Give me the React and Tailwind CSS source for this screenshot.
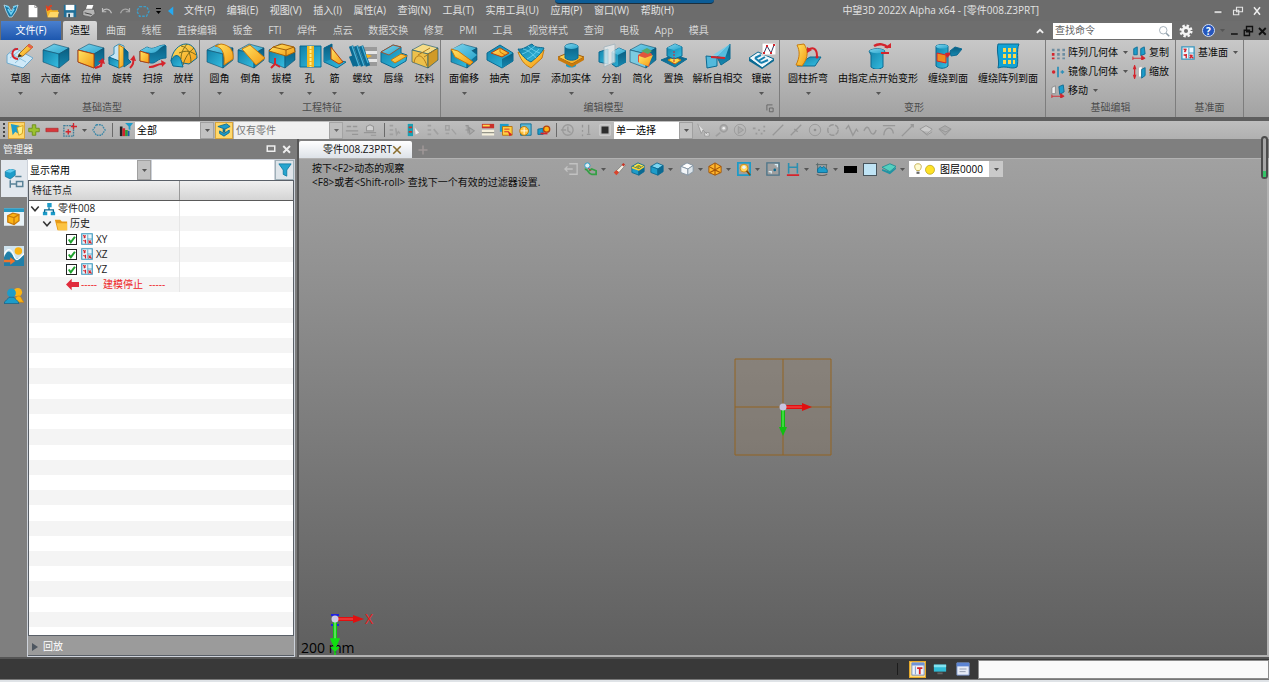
import { useState } from 'react';

const MENUS = ['文件(F)', '编辑(E)', '视图(V)', '插入(I)', '属性(A)', '查询(N)', '工具(T)', '实用工具(U)', '应用(P)', '窗口(W)', '帮助(H)'];
const TABS = ['曲面', '线框', '直接编辑', '钣金', 'FTI', '焊件', '点云', '数据交换', '修复', 'PMI', '工具', '视觉样式', '查询', '电极', 'App', '模具'];

const B1 = '#5fcbee';
const B2 = '#1d9cc9';
const B3 = '#0b6a92';
const Y1 = '#ffd84a';
const Y2 = '#fbb414';
const Y3 = '#c97a0c';
const RED = '#d4242c';

// shaded fills of the ribbon icons, see <Shades />
const GT = 'url(#shade-top)';
const GB = 'url(#shade-blue)';
const GD = 'url(#shade-dark)';
const GY = 'url(#shade-yellow)';

function Shades() {
  return (
    <svg aria-hidden="true" className="absolute h-0 w-0">
      <defs>
        <linearGradient id="shade-top" x1="0" y1="0" x2="1" y2="1"><stop stopColor="#7ed3ec" /><stop offset="1" stopColor="#2aa6cd" /></linearGradient>
        <linearGradient id="shade-blue" x1="0" y1="0" x2="1" y2="1"><stop stopColor="#1180a8" /><stop offset="1" stopColor="#36bfe2" /></linearGradient>
        <linearGradient id="shade-dark" x1="0" y1="0" x2="0" y2="1"><stop stopColor="#0a5d80" /><stop offset="1" stopColor="#1688b0" /></linearGradient>
        <linearGradient id="shade-yellow" x1="0" y1="0" x2="1" y2="1"><stop stopColor="#ffe566" /><stop offset="1" stopColor="#f59a12" /></linearGradient>
      </defs>
    </svg>
  );
}

function Solid({ top = GT, left = GB, right = GD }) {
  return (
    <g stroke="#0c4f6e" strokeWidth=".6" strokeLinejoin="round">
      <path d="M1 7 12 1 27 5 17 11Z" fill={top} />
      <path d="M1 7 17 11V25L1 19Z" fill={left} />
      <path d="M17 11 27 5V17L17 25Z" fill={right} />
    </g>
  );
}

const BIG = {
  sketch: (
    <>
      <path d="M1 12 9 5 27 15 17 25 1 20Z" fill="#cfe9f8" stroke="#6fa9cc" />
      <path d="M4 15l9-7M9 20l9-8M4 10l16 9" stroke="#8fc3e0" fill="none" />
      <path d="M12 6C5 5 4 16 12 16" fill="none" stroke={RED} strokeWidth="2" />
      <path d="M13 11 23 1l4 3-10 9-5 1z" fill={GY} stroke="#a35f0a" strokeWidth=".8" />
      <path d="M23 1l4 3-2 2-4-3z" fill="#e8604c" />
      <path d="M12 14l1-3 3 2z" fill="#222" />
    </>
  ),
  block: <Solid />,
  extrude: (
    <>
      <Solid />
      <path d="M1 7 17 11V25L1 19Z" fill={GY} stroke="#b5410f" />
      <path d="M18 25l6-2 1-5" fill="none" stroke={RED} strokeWidth="2.200" />
      <path d="M21 19l5-4 2 6z" fill={RED} />
    </>
  ),
  revolve: (
    <>
      <path d="M1 18V14l5-3V4l5-3 5 2v20l-5 2z" fill="#c4e5f4" stroke="#3c8fb3" />
      <path d="M1 14l10 4v7L1 21z" fill={GB} stroke={B3} />
      <path d="M11 2l5 3v17l-5 3z" fill={GY} stroke={Y3} />
      <path d="M16 5l4 4v7l3 3-7 5z" fill={GD} stroke={B3} />
      <path d="M22 25c3-3 4-6 3-9" fill="none" stroke={RED} strokeWidth="2" />
      <path d="M22 17l4-5 2 6z" fill={RED} />
    </>
  ),
  sweep: (
    <>
      <path d="M1 8l7-4c7 4 10-2 18-2l1 1v12c-9 0-10 6-15 5L1 18z" fill={GD} stroke={B3} />
      <path d="M1 8l7-4c7 4 10-2 18-2-7 3-7 8-14 8z" fill={GT} />
      <path d="M1 8l9 3v9l-9-2z" fill={GY} stroke="#b5410f" />
      <path d="M10 24c6 1 8-4 14-3" fill="none" stroke={RED} strokeWidth="2" />
      <path d="M22 17l5 3-4 4z" fill={RED} />
    </>
  ),
  loft: (
    <>
      <path d="M1 18C2 8 9 1 16 1s11 7 11 14l-8 6z" fill={GY} stroke={B3} />
      <path d="M1 18c2-6 8-8 10-1l2 7-10-1z" fill={GB} stroke={B3} />
      <path d="M11 3c7 1 10 8 10 17M17 1c-4 5-6 9-6 15M24 5c-6 5-9 10-11 17M9 10c7-3 12-2 17 2" fill="none" stroke="#7b6b1b" />
    </>
  ),
  fillet: (
    <>
      <Solid />
      <path d="M9 3C17 4 19 12 18 22l9-6C28 8 24 2 15 1z" fill={GY} stroke={Y3} />
    </>
  ),
  chamfer: (
    <>
      <Solid />
      <path d="M5 6 13 2 28 15 19 22Z" fill={GY} stroke={Y3} />
    </>
  ),
  draft: (
    <>
      <Solid />
      <path d="M1 8 5 4 14 1 26 4 27 9 18 13Z" fill={GY} stroke="#a35f0a" />
      <path d="M5 4l13 3 8-3M18 7v6" fill="none" stroke="#a35f0a" />
      <path d="M7 15v6l-4 4m4-4 5 3" fill="none" stroke={RED} strokeWidth="2" />
    </>
  ),
  hole: (
    <>
      <path d="M4 3h21v21H4z" fill={GB} stroke={B3} />
      <path d="M11 3h7v21h-7z" fill="#f2b822" />
      <path d="M14.500 3v21" stroke="#fff08a" strokeWidth="2" strokeDasharray="3 1" />
    </>
  ),
  rib: (
    <>
      <path d="M3 5 11 1v15l14 3-9 6L3 19z" fill={GB} stroke={B3} />
      <path d="M3 5l8-4v15l-8 3z" fill={GD} />
      <path d="M10 4l12 15-4 2-8-5z" fill={GY} stroke="#b5410f" />
    </>
  ),
  thread: (
    <>
      <path d="M15 4h13v4H15zM15 11h13v5H15zM15 19h13v4H15z" fill="#9a9a9a" />
      <path d="M17 8h11v3H17zM17 16h11v3H17z" fill="#e6e6e6" />
      <path d="M2 3l7 20M7 3l7 20M12 3l7 20M2 13l4 10" stroke={B3} strokeWidth="4.500" />
      <path d="M3 3l7 20M8 3l7 20M13 3l6 17" stroke="#4db4d8" strokeWidth="1.200" />
      <path d="M17 11l6 2-5 2z" fill={Y2} />
    </>
  ),
  lip: (
    <>
      <path d="M1 9 13 2l8 2v6l6 2-1 6-12 7L1 19z" fill={GB} stroke={B3} />
      <path d="M1 9l12-7 8 2-12 8z" fill={GT} stroke="#b5410f" strokeWidth=".8" />
      <path d="M11 17l10-6 6 2-12 7z" fill={GY} stroke={Y3} />
    </>
  ),
  stock: (
    <>
      <Solid top="#f6dc86" left="#edc04b" right="#d19a26" />
      <path d="M3 20c1-10 9-10 13 3M7 12l12-7M13 14l11-7" fill="none" stroke="#b07a1b" />
    </>
  ),
  faceOffset: (
    <>
      <Solid />
      <path d="M2 6 13 1 27 12 21 17Z" fill={GT} />
      <path d="M1 6 8 8 23 19 20 22 5 14Z" fill={GY} stroke={Y3} />
    </>
  ),
  shell: (
    <>
      <path d="M1 10 14 2l13 8v8l-11 7L1 17z" fill={GB} stroke={B3} />
      <path d="M16 16v9l11-7v-8z" fill={GD} />
      <path d="M5 10l9-5 9 5-7 4z" fill={GY} stroke="#b5410f" />
      <path d="M14 5v4l5 3" fill="none" stroke={Y3} />
    </>
  ),
  thicken: (
    <>
      <path d="M1 9c5 3 7-5 14-7 3 4 7 3 12 5l-2 8-11 10C9 22 5 20 1 9z" fill={GY} stroke={Y3} />
      <path d="M1 6c5 1 9-3 14-5 3 4 7 3 12 4-2 5-8 10-13 14C9 17 4 12 1 6z" fill={GB} stroke={B3} />
      <path d="M6 6c5 1 10 5 13 9M11 3c3 3 8 6 12 7M5 11c4-1 9-5 13-8M10 16c4-2 9-6 12-10" fill="none" stroke="#7fdcf8" strokeWidth=".7" />
    </>
  ),
  addShape: (
    <>
      <path d="M9 19h10v4c-3 2-7 2-10 0z" fill={B2} />
      <path d="M1 14l12-5 14 5-12 7z" fill={GY} stroke="#a35f0a" />
      <path d="M1 14v3l14 7v-3zM15 21l12-7v3l-12 7z" fill={Y3} />
      <path d="M8 3c3-3 9-3 13 0v12c-4 3-9 3-13 0z" fill={GD} stroke={B3} />
      <ellipse cx="14.500" cy="3.500" rx="6.500" ry="2.500" fill={GT} />
    </>
  ),
  divide: (
    <>
      <path d="M1 9l9-3v15l-9-2z" fill={GB} stroke={B3} />
      <path d="M14 9l7-4 7 3v11l-10 5-4-3z" fill={GB} stroke={B3} />
      <path d="M14 9l7-4 7 3-8 4z" fill={GT} />
      <path d="M20 12v12l8-5V8z" fill={GD} />
      <path d="M6 4l11-3v18L6 24z" fill="#e9eef0" opacity=".75" stroke="#9fb3bd" />
    </>
  ),
  simplify: (
    <>
      <Solid left="#7ccbe0" />
      <path d="M9 19V12l8-5 6 4-3 13z" fill="#e2553b" />
      <path d="M10 13l6 2 8-3-5 11-9-3z" fill={GY} />
      <path d="M12 8l6-3 5 3-4 3z" fill="#58a868" />
    </>
  ),
  replace: (
    <>
      <path d="M1 17l13-5 13 4-12 8z" fill={GD} stroke={B3} />
      <path d="M8 17l6-3 7 3-6 4z" fill={Y1} stroke={Y3} />
      <path d="M7 5l8-4 7 3v9l-8 3-7-3z" fill={GB} stroke={B3} />
      <path d="M7 5l8-4 7 3-8 3z" fill={GT} />
      <path d="M14 8v13" stroke={RED} strokeDasharray="2 1" />
    </>
  ),
  intersect: (
    <>
      <path d="M2 13l11 1v9L3 25z" fill="#53b9dc" stroke={B3} />
      <path d="M13 14 26 1v15l-9 6z" fill={GD} stroke={B3} />
      <path d="M9 12 26 1l-5 14z" fill="#67d0f0" opacity=".8" />
      <path d="M7 14l14 1" stroke={RED} strokeWidth="2" />
    </>
  ),
  emboss: (
    <>
      <path d="M1 15l9-6 16 7-12 9z" fill="#eef7fb" stroke={B3} />
      <path d="M1 15v3l13 8v-2zM14 26l12-8v-2l-12 9z" fill={B3} />
      <path d="M7 15l6-3M10 18l7-4M13 20l7-3M7 15l6 5" stroke="#167fae" strokeWidth="2" fill="none" />
      <path d="M14 0h14v12H14z" fill="#fff" stroke="#bbb" />
      <path d="M16 10l3-7 4 7 3-8" fill="none" stroke="#3a3a60" />
      <path d="M15 9h2v2h-2zM18 2h2v2h-2zM22 9h2v2h-2zM25 1h2v2h-2z" fill={RED} />
    </>
  ),
  bend: (
    <>
      <path d="M8 19l8-5h11l-6 9H3z" fill={GB} stroke={B3} />
      <path d="M3 2l7-1c4 6 5 13-2 22l-6-1C6 14 6 8 3 2z" fill={GY} stroke={Y3} />
      <path d="M14 7c5-4 9-1 9 6" fill="none" stroke={RED} strokeWidth="2" />
      <path d="M13 4v6l5-3z" fill={RED} />
      <circle cx="23" cy="14" r="1.500" fill={RED} />
    </>
  ),
  morph: (
    <>
      <path d="M5 8c4-3 13-3 16 0l-2 3v13c-4 3-8 3-12 0V12z" fill={GB} stroke={B3} />
      <path d="M5 8c4-3 13-3 16 0-4 3-12 3-16 0z" fill={GT} />
      <path d="M10 3c5-3 11-2 14 2" fill="none" stroke={RED} strokeWidth="2.500" />
      <path d="M20 5h7l0-5z" fill={RED} />
      <path d="M17 10h8" stroke={RED} strokeWidth="2" />
    </>
  ),
  wrapFace: (
    <>
      <path d="M2 3c3-2 9-2 12 0v20c-3 3-9 3-12 0z" fill={GB} stroke={B3} />
      <ellipse cx="8" cy="3.500" rx="6" ry="2" fill={GT} />
      <path d="M3 10l9 2v8l-9-2z" fill="#f08a1e" stroke={RED} />
      <path d="M11 10l8-1-6 6z" fill={RED} />
      <path d="M16 8l5-4 7 2-5 6-6 1z" fill={GD} stroke={B3} />
    </>
  ),
  wrapPattern: (
    <>
      <path d="M4 1h21c-3 7 0 16-2 23-6 3-10-2-19 1 2-8-2-16 0-24z" fill="#13a3d4" stroke={B3} />
      <path d="M9 5h3v4H9zM14 5h3v4h-3zM19 5h3v4h-3zM9 11h3v4H9zM14 11h3v4h-3zM19 11h3v4h-3zM9 17h3v4H9zM14 17h3v4h-3zM19 17h2v4h-2z" fill={Y1} />
    </>
  ),
};

const GROUPS = [
  {
    title: '基础造型',
    pad: 'pl-[5px] w-[200px]',
    tools: [
      ['草图', 'sketch', 1, 'w-[31px]'],
      ['六面体', 'block', 1, 'w-[40px]'],
      ['拉伸', 'extrude', 0, 'w-[31px]'],
      ['旋转', 'revolve', 0, 'w-[31px]'],
      ['扫掠', 'sweep', 1, 'w-[31px]'],
      ['放样', 'loft', 1, 'w-[31px]'],
    ],
  },
  {
    title: '工程特征',
    pad: 'pl-1 w-[241px]',
    tools: [
      ['圆角', 'fillet', 1, 'w-[31px]'],
      ['倒角', 'chamfer', 0, 'w-[31px]'],
      ['拔模', 'draft', 1, 'w-[31px]'],
      ['孔', 'hole', 1, 'w-[25px]'],
      ['筋', 'rib', 1, 'w-[25px]'],
      ['螺纹', 'thread', 1, 'w-[31px]'],
      ['唇缘', 'lip', 0, 'w-[31px]'],
      ['坯料', 'stock', 0, 'w-[31px]'],
    ],
  },
  {
    title: '编辑模型',
    pad: 'pl-[3px] w-[339px]',
    launcher: true,
    tools: [
      ['面偏移', 'faceOffset', 1, 'w-[40px]'],
      ['抽壳', 'shell', 0, 'w-[31px]'],
      ['加厚', 'thicken', 0, 'w-[31px]'],
      ['添加实体', 'addShape', 1, 'w-[50px]'],
      ['分割', 'divide', 1, 'w-[31px]'],
      ['简化', 'simplify', 0, 'w-[31px]'],
      ['置换', 'replace', 0, 'w-[31px]'],
      ['解析自相交', 'intersect', 0, 'w-[57px]'],
      ['镶嵌', 'emboss', 1, 'w-[31px]'],
    ],
  },
  {
    title: '变形',
    pad: 'pl-[3px] w-[266px]',
    tools: [
      ['圆柱折弯', 'bend', 1, 'w-[50px]'],
      ['由指定点开始变形', 'morph', 1, 'w-[90px]'],
      ['缠绕到面', 'wrapFace', 0, 'w-[50px]'],
      ['缠绕阵列到面', 'wrapPattern', 0, 'w-[70px]'],
    ],
  },
];

function Caret({ className = 'text-[#555]' }) {
  return (
    <svg viewBox="0 0 5 3" className={`h-[3px] w-[5px] shrink-0 ${className}`}>
      <path d="M0 0h5L2.500 3z" fill="currentColor" />
    </svg>
  );
}

// 16 unit glyph used by every small toolbar
function Glyph({ children, className = 'h-3.5 w-3.5' }) {
  return (
    <svg viewBox="0 0 16 16" className={`shrink-0 ${className}`} fill="none">
      {children}
    </svg>
  );
}

function IconButton({ label, className = '', children }) {
  return (
    <button type="button" aria-label={label} className={`flex shrink-0 items-center justify-center ${className}`}>
      {children}
    </button>
  );
}

const PlaneGlyph = () => (
  <>
    <path d="M1 1h14v14H1z" fill="#eaf6fb" stroke="#3a96bd" strokeWidth="1.500" />
    <path d="M9 2v6h6M9 8v6" stroke="#3a96bd" />
    <path d="M3 3l3 3M6 3L4 7M6 9v5M3 10l3 1M10 10l4 4M13 10l-3 4" stroke={RED} strokeWidth="1.600" />
  </>
);

function TitleBar() {
  return (
    <header className="flex h-[21px] shrink-0 items-center bg-[#6c6c6c] text-[#e2e2e2]">
      <div className="flex w-[184px] shrink-0 items-center pl-[3px]">
        <Glyph className="h-4 w-4">
          <path d="M1 2l5 2 2 4 3-4 4-2-2 6-4 6H6L3 8z" fill="#1478a8" stroke="#bfe6f6" strokeWidth=".8" />
          <path d="M5 6l3 5 3-5M3 3l3 1M13 3l-3 1" stroke="#6fd0f3" strokeWidth="1.500" />
        </Glyph>
        <IconButton label="新建" className="ml-[7px] w-3.5">
          <Glyph><path d="M3 1h7l3 3v11H3z" fill="#fff" /><path d="M10 1v3h3" stroke="#999" /></Glyph>
        </IconButton>
        <IconButton label="打开" className="ml-[5px] w-3.5">
          <Glyph><path d="M1 5h5l2 2h7v8H3z" fill="#f4b223" /><path d="M3 15l3-6h10l-2 6z" fill="#ffd768" /><path d="M8 2c-3 0-4 1-4 4M6 6L3 7 2 3z" stroke="#e2401f" fill="#e2401f" strokeWidth="1.500" /></Glyph>
        </IconButton>
        <IconButton label="保存" className="ml-1 w-3.5">
          <Glyph><path d="M1 1h14v14H1z" fill="#1f6f98" /><path d="M3 1h10v6H3z" fill="#fff" /><path d="M4 10h8v5H4z" fill="#d7e5ec" /><path d="M6 11h2v4H6z" fill="#1c3c4c" /></Glyph>
        </IconButton>
        <IconButton label="打印" className="ml-[5px] w-3.5">
          <Glyph><path d="M6 1h7l-2 6H4z" fill="#fff" /><path d="M1 8l3-2h10l1 5-5 4-9-2z" fill="#b5b5b5" stroke="#555" strokeWidth=".8" /><path d="M3 10l8 2" stroke="#333" /></Glyph>
        </IconButton>
        <IconButton label="撤销" className="ml-1 w-3.5">
          <Glyph className="h-3 w-3"><path d="M2 8c4-4 10-3 12 3M2 4v5h5" stroke="#bdbdbd" strokeWidth="1.500" /></Glyph>
        </IconButton>
        <IconButton label="重做" className="ml-1 w-3.5">
          <Glyph className="h-3 w-3"><path d="M14 8C10 4 4 5 2 11M14 4v5H9" stroke="#a8a8a8" strokeWidth="1.500" /></Glyph>
        </IconButton>
        <IconButton label="旋转视图" className="ml-1 w-3.5">
          <Glyph><path d="M4 3h8l3 5-3 6H4L1 8z" stroke="#3c9ec9" strokeWidth="1.500" strokeDasharray="3 1.500" /></Glyph>
        </IconButton>
        <IconButton label="自定义" className="ml-0.5 w-3 flex-col gap-0.5">
          <span className="h-px w-[5px] bg-black" /><Caret className="text-black" />
        </IconButton>
        <Glyph className="ml-px h-3 w-3"><path d="M11 2v12L4 8z" fill="#25a9f0" /></Glyph>
      </div>
      <nav className="flex w-[490px] shrink-0 justify-between">
        {MENUS.map(m => <button type="button" key={m} className="whitespace-nowrap">{m}</button>)}
      </nav>
      <div className="flex flex-1 items-center justify-end">
        <h1 className="whitespace-nowrap">中望3D 2022X Alpha x64 - [零件008.Z3PRT]</h1>
        <div className="ml-[173px] flex w-[57px] items-center justify-between pr-1.5">
          <IconButton label="最小化"><Glyph className="h-3 w-3"><path d="M3 8h10v3H3z" fill="#e4e4e4" stroke="#444" strokeWidth=".5" /></Glyph></IconButton>
          <IconButton label="还原"><Glyph className="h-3 w-3"><path d="M6 3h8v6h-8zM2 7h7v6H2z" stroke="#e4e4e4" strokeWidth="1.500" /></Glyph></IconButton>
          <IconButton label="关闭"><Glyph className="h-3 w-3"><path d="M4 3l8 10M12 3L4 13" stroke="#eee" strokeWidth="2" /></Glyph></IconButton>
        </div>
      </div>
    </header>
  );
}

function TabBar({ active, onSelect }) {
  return (
    <div className="flex h-[19px] shrink-0 items-center bg-[#6e6e6e] text-[#d6d6d6]">
      <button type="button" className="ml-px h-full w-[60px] shrink-0 bg-linear-to-b from-[#4a80cf] to-[#1d57ae] text-white">文件(F)</button>
      <button type="button" onClick={() => onSelect('造型')} className="ml-0.5 h-full w-[34px] shrink-0 rounded-t-xs bg-linear-to-b from-[#d9d9d9] to-[#c4c4c4] text-black">造型</button>
      <div className="ml-[9px] flex w-[603px] shrink-0 justify-between">
        {TABS.map(t => (
          <button type="button" key={t} onClick={() => onSelect(t)} aria-pressed={active === t} className="whitespace-nowrap">{t}</button>
        ))}
      </div>
      <div className="flex flex-1 items-center justify-end pr-px">
        <IconButton label="折叠功能区"><Glyph className="h-2.5 w-2.5"><path d="M3 11l5-5 5 5" stroke="#eee" strokeWidth="3" /></Glyph></IconButton>
        <label className="ml-2 flex h-4 w-[119px] items-center bg-white px-0.5">
          <input aria-label="查找命令" placeholder="查找命令" className="w-full min-w-0 outline-none placeholder:text-[#666]" />
          <Glyph className="h-3 w-3"><circle cx="7" cy="7" r="5" stroke="#8a9aa5" /><path d="M11 11l4 4" stroke="#8a9aa5" strokeWidth="2" /></Glyph>
        </label>
        <IconButton label="设置" className="ml-[7px]">
          <Glyph><circle cx="8" cy="8" r="6" stroke="#f4f4f4" strokeWidth="3" strokeDasharray="2.700 2" /><circle cx="8" cy="8" r="3.800" stroke="#f4f4f4" strokeWidth="3" /></Glyph>
        </IconButton>
        <IconButton label="帮助" className="ml-[9px]">
          <span className="flex h-[13px] w-[13px] items-center justify-center rounded-full border border-[#cfdcf5] bg-[#2556bd] leading-none font-bold text-white">?</span>
        </IconButton>
        <span className="ml-[5px]"><Caret /></span>
        <div className="ml-[3px] flex items-center gap-0.5">
          <IconButton label="最小化文档"><Glyph className="h-3 w-3"><path d="M4 12h9" stroke="#111" strokeWidth="2" /></Glyph></IconButton>
          <IconButton label="还原文档"><Glyph className="h-3 w-3"><path d="M6 2h8v7H6zM3 7h7v7H3z" stroke="#111" strokeWidth="1.800" /></Glyph></IconButton>
          <IconButton label="关闭文档"><Glyph className="h-3 w-3"><path d="M4 4l9 9M13 4l-9 9" stroke="#111" strokeWidth="2.500" /></Glyph></IconButton>
        </div>
      </div>
    </div>
  );
}

function GroupTitle({ children, className = '' }) {
  return <div className={`flex h-[19px] shrink-0 items-center justify-center text-[#4c4c4c] ${className}`}>{children}</div>;
}

function SmallTool({ label, caret, children }) {
  return (
    <button type="button" className="flex h-[19px] shrink-0 items-center gap-[3px] whitespace-nowrap">
      <Glyph>{children}</Glyph>
      {label}
      {caret && <span className="ml-0.5"><Caret /></span>}
    </button>
  );
}

function Ribbon() {
  return (
    <section className="flex h-[77px] shrink-0 bg-linear-to-b from-[#c8c8c8] to-[#a2a2a2] text-[#0a0a0a]">
      {GROUPS.map(g => (
        <div key={g.title} className={`flex shrink-0 flex-col border-r border-[#7d7d7d] pt-[3px] ${g.pad}`}>
          <div className="flex min-h-0 flex-1">
            {g.tools.map(([label, icon, caret, width]) => (
              <button type="button" key={label} className={`flex flex-col items-center ${width}`}>
                <svg viewBox="0 0 28 26" className="h-[26px] w-[28px] shrink-0" fill="none">{BIG[icon]}</svg>
                <span className="mt-0.5 leading-[14px] whitespace-nowrap">{label}</span>
                {caret ? <span className="mt-[7px] block"><Caret /></span> : null}
              </button>
            ))}
          </div>
          <div className="relative">
            <GroupTitle className={g.launcher ? 'pr-4' : ''}>{g.title}</GroupTitle>
            {g.launcher && (
              <button type="button" aria-label="更多设置" className="absolute right-1 bottom-1">
                <Glyph className="h-2.5 w-2.5"><path d="M3 12V3h9M7 8h6v6H7z" stroke="#666" strokeWidth="1.500" /></Glyph>
              </button>
            )}
          </div>
        </div>
      ))}
      <div className="flex w-[130px] shrink-0 flex-col border-r border-[#7d7d7d] pt-[3px]">
        <div className="flex min-h-0 flex-1 gap-1 pl-[5px]">
          <div className="flex flex-col items-start">
            <SmallTool label="阵列几何体" caret>
              <path d="M1 3h3v3H1zM7 3h3v3H7zM13 3h3v3h-3zM7 8h3v3H7zM13 8h3v3h-3z" fill="#6e8da0" /><path d="M1 8h3v3H1zM1 13h3v2H1z" fill={RED} /><path d="M7 13h3v2H7zM13 13h3v2h-3z" fill="#6e8da0" />
            </SmallTool>
            <SmallTool label="镜像几何体" caret>
              <path d="M8 2v12" stroke="#2c8fb8" strokeWidth="2" /><path d="M11 8h4M13 6v4" stroke="#2c8fb8" strokeWidth="1.500" /><circle cx="3" cy="8" r="2" fill={RED} />
            </SmallTool>
            <SmallTool label="移动" caret>
              <path d="M1 4l4-2v9H1z" fill="#f2f2f2" stroke="#888" /><path d="M9 3l5-2 1 8-5 3z" fill={B2} stroke={B3} /><path d="M1 14h12M1 12v4M11 11l4 3-4 2z" stroke={RED} fill={RED} />
            </SmallTool>
          </div>
          <div className="flex flex-col items-start">
            <SmallTool label="复制">
              <path d="M2 3l4-2v9H2zM10 3l4-2 1 8-5 2z" fill={B2} stroke={B3} /><path d="M1 14h12M1 12v4M11 11l4 3-4 2z" stroke={RED} fill={RED} />
            </SmallTool>
            <SmallTool label="缩放">
              <path d="M3 3v10M3 1l1 3H2zM3 15l1-3H2z" stroke={RED} fill={RED} strokeWidth="1.500" /><path d="M8 3l3-1v11H8z" fill="#fff" /><path d="M11 5l4-2v9l-4 3z" fill={B2} stroke={B3} />
            </SmallTool>
          </div>
        </div>
        <GroupTitle>基础编辑</GroupTitle>
      </div>
      <div className="flex w-[68px] shrink-0 flex-col border-r border-[#7d7d7d] pt-[3px]">
        <div className="flex min-h-0 flex-1 items-start pl-[5px]">
          <SmallTool label="基准面" caret><PlaneGlyph /></SmallTool>
        </div>
        <GroupTitle>基准面</GroupTitle>
      </div>
    </section>
  );
}

function Combo({ label, value, className, arrow = 'w-[14px]', text = 'text-black' }) {
  return (
    <div className={`flex shrink-0 items-stretch ${className}`}>
      <select aria-label={label} defaultValue={value} className={`min-w-0 flex-1 appearance-none bg-white pl-0.5 outline-none ${text}`}>
        <option>{value}</option>
      </select>
      <span className={`flex shrink-0 items-center justify-center border border-[#a0a0a0] bg-[#c2c2c2] ${arrow}`}><Caret /></span>
    </div>
  );
}

const Sep = ({ className = '' }) => <span className={`block h-3.5 w-px shrink-0 bg-[#6a6a6a] ${className}`} />;

const PICK_GLYPHS = [
  ['拾取', <path d="M2 1l4 11 2-4 5 5M10 11h5v4h-5z" stroke="#909090" fill="#ededed" />],
  ['设置拾取', <><circle cx="10" cy="6" r="4" stroke="#999" strokeWidth="2" /><circle cx="10" cy="6" r="1.500" fill="#fff" /><path d="M1 15l5-4" stroke="#999" strokeWidth="2" /></>],
  ['播放', <><circle cx="8" cy="8" r="6.500" stroke="#929292" /><path d="M6 4l6 4-6 4z" stroke="#929292" fill="#aaa" /></>],
  ['点', <path d="M1 6h3M7 8h2M13 4h2M4 12h2M10 12h2M13 9h2" stroke="#939393" strokeWidth="2" />],
  ['直线', <path d="M2 14L14 2" stroke="#909090" strokeWidth="1.500" />],
  ['中点', <path d="M2 14L14 2M6 7l4 3" stroke="#909090" strokeWidth="1.500" />],
  ['圆心', <><circle cx="8" cy="8" r="6.500" stroke="#909090" /><circle cx="8" cy="8" r="1.500" fill="#888" /></>],
  ['圆', <circle cx="8" cy="8" r="6" stroke="#909090" strokeWidth="1.500" strokeDasharray="6 1.500" />],
  ['折线', <path d="M1 7l3-4 5 11 4-7 2 3" stroke="#909090" strokeWidth="1.500" />],
  ['曲线', <path d="M1 9c3-6 5-5 7 0s5 5 7-1" stroke="#909090" strokeWidth="1.500" />],
  ['切线', <path d="M2 14C3 4 12 3 13 12M1 3h14" stroke="#909090" strokeWidth="1.500" />],
  ['垂足', <path d="M1 15L14 2M11 2h3v3" stroke="#909090" strokeWidth="1.500" />],
  ['面', <path d="M1 7l7-4 7 4-6 6zM4 9l5 5 6-4" stroke="#8c8c8c" fill="#cfcfcf" />],
  ['体', <path d="M1 7l7-4 7 4-6 3zM2 8l6 6 6-6" stroke="#8c8c8c" fill="#a8a8a8" />],
];

const FILTER_GLYPHS = [
  ['添加列', <path d="M3 3h4M3 8h4M3 13h4M10 6l1 7 2-3 2 2" stroke="#a0a0a0" strokeWidth="1.800" />],
  ['列', <><path d="M2 1h6v14H2z" fill="#18a0b4" /><path d="M3 5h4M3 10h4" stroke="#c9362b" strokeWidth="2" /><path d="M10 5l1 8 4-2z" fill="#eee" /></>],
  ['移除列', <path d="M3 3h4M3 8h4M3 13h4M10 7l5 6" stroke="#a0a0a0" strokeWidth="1.800" />],
  ['替换列', <path d="M3 3h4v5H3zM3 12h4M10 7l5 6" stroke="#a0a0a0" strokeWidth="1.500" />],
  ['选择', <path d="M4 3h3v9M8 5l1 8 5-4zM4 8h5" stroke="#949494" fill="#ababab" strokeWidth="1.200" />],
  ['列表', <><path d="M1 1h14v5H1z" fill="#c9302a" /><path d="M2 3h8" stroke={Y1} strokeWidth="2" /><path d="M1 9h14M1 13h14" stroke="#f5f0dc" strokeWidth="2.500" /><path d="M1 11h14" stroke="#8a8a7a" /></>],
  ['图层', <><path d="M1 1h10v9H1z" fill={B2} /><path d="M4 4h11v10H4z" fill="#ffcf40" stroke="#b76f08" /><path d="M6 7h6M6 10h5" stroke={RED} /><path d="M10 9l5 4-3 2z" fill={RED} /></>],
  ['属性', <><path d="M3 1h12v13H3z" fill="#5cb9d6" stroke={B3} /><circle cx="7" cy="9" r="5" fill="#ffc33d" stroke="#b76f08" /><path d="M3 9h8M7 5v8" stroke="#fff" /></>],
  ['历史', <><path d="M1 13V7l6-1v7z" fill={B2} stroke={B3} /><circle cx="11" cy="7" r="3.500" fill={Y2} stroke="#b5410f" strokeWidth="1.500" /><path d="M4 12h8" stroke={RED} strokeWidth="2" /></>],
];

function SelectBar() {
  return (
    <div className="flex h-[18px] shrink-0 items-center bg-linear-to-b from-[#bebebe] to-[#b0b0b0]">
      <span className="ml-[3px] h-3.5 border-l-2 border-dotted border-[#444]" />
      <IconButton label="选择过滤" className="ml-[3px] h-[17px] w-[17px] border border-[#d8a43c] bg-[#ffd86b]">
        <Glyph><path d="M1 1l2 13 3-4 5 3-2-6 2-4z" fill={B2} /><path d="M8 5l7-2-1 9-4 2z" fill="#fdf08a" stroke="#d19c12" /></Glyph>
      </IconButton>
      <IconButton label="增加" className="w-[18px]"><Glyph><path d="M6 2h4v4h4v4h-4v4H6v-4H2V6h4z" fill="#9cc22e" stroke="#6b8d18" /></Glyph></IconButton>
      <IconButton label="减少" className="w-[18px]"><Glyph><path d="M1 6h14v4H1z" fill="#d8363a" stroke="#a31d20" strokeWidth=".6" /></Glyph></IconButton>
      <IconButton label="框选" className="w-[18px]"><Glyph><path d="M1 3h11v12H1z" stroke="#3d7d99" strokeDasharray="2 1" strokeWidth="1.500" /><path d="M12 0v7M9 4h7M6 7v6M3 10h6" stroke={RED} strokeWidth="1.500" /></Glyph></IconButton>
      <span className="flex w-[10px] justify-center"><Caret /></span>
      <IconButton label="多边形" className="w-[20px]"><Glyph><path d="M5 2h6l4 6-4 6H5L1 8z" stroke="#3c88a8" strokeWidth="1.500" strokeDasharray="2 1" /></Glyph></IconButton>
      <Sep className="ml-[3px]" />
      <IconButton label="颜色过滤" className="ml-1 w-[17px]">
        <Glyph><path d="M1 4h3v11H1z" fill="#222" /><path d="M4 6h3v9H4z" fill={RED} /><path d="M7 8h3v7H7z" fill="#2f9a3b" /><path d="M10 9h2v6h-2z" fill="#1a5aa8" /><path d="M7 0h9l-3 4v4l-2-1V4z" fill={B2} /></Glyph>
      </IconButton>
      <Combo label="过滤类型" value="全部" className="ml-px h-[17px] w-[79px]" />
      <IconButton label="仅有零件过滤" className="ml-px h-[17px] w-[18px] border border-[#d8a43c] bg-[#ffd86b]">
        <Glyph><path d="M1 4l10-3 4 3-6 3z" fill={B2} stroke={B3} /><path d="M3 9l5 3 6-4v3l-6 4-5-3z" fill={B2} stroke={B3} /><path d="M8 7v4" stroke={B3} strokeWidth="3" /></Glyph>
      </IconButton>
      <div className="ml-px flex opacity-80"><Combo label="零件范围" value="仅有零件" className="h-[17px] w-[109px]" text="text-[#666]" /></div>
      <div className="flex w-[36px] items-center justify-around">
        <IconButton label="对齐"><Glyph><path d="M2 4h5M9 4h5M1 9h14M8 13h7" stroke="#969696" strokeWidth="1.500" /></Glyph></IconButton>
        <IconButton label="图章"><Glyph><path d="M4 9V4l4-2 4 2v5zM1 11h14M9 14h6" stroke="#969696" fill="#d0d0d0" strokeWidth="1.200" /></Glyph></IconButton>
      </div>
      <Sep className="ml-[5px]" />
      <div className="flex w-[168px] shrink-0">
        {FILTER_GLYPHS.map(([label, art]) => <IconButton key={label} label={label} className="flex-1"><Glyph>{art}</Glyph></IconButton>)}
      </div>
      <Sep className="ml-[3px]" />
      <div className="flex w-[57px] shrink-0 items-center justify-around">
        <IconButton label="定时"><Glyph><circle cx="9" cy="8" r="6" stroke="#9a9a9a" strokeWidth="1.500" /><path d="M1 8h6M9 4v5l3 2" stroke="#9a9a9a" strokeWidth="1.500" /></Glyph></IconButton>
        <IconButton label="排序"><Glyph><path d="M4 2v3M4 8v2M4 13v2M11 2v10M9 13h4" stroke="#969696" strokeWidth="1.500" /></Glyph></IconButton>
        <IconButton label="实体"><Glyph><path d="M2 2h12v12H2z" stroke="#d4d4d4" /><path d="M4 4h8v8H4z" fill="#2c2c2c" /></Glyph></IconButton>
      </div>
      <Combo label="选择方式" value="单一选择" className="h-[17px] w-[79px]" />
      <div className="ml-px flex w-[260px] shrink-0 opacity-80">
        {PICK_GLYPHS.map(([label, art]) => <IconButton key={label} label={label} className="flex-1"><Glyph>{art}</Glyph></IconButton>)}
      </div>
    </div>
  );
}

function SideTabs() {
  return (
    <div className="flex w-[27px] shrink-0 flex-col items-center bg-[#7f7f7f] pt-px pl-px">
      <IconButton label="特征管理" className="h-[37px] w-full bg-[#e3e8ee]">
        <Glyph className="h-5 w-5"><path d="M1 2l4-2 4 1v4L5 8 1 6z" fill={B2} stroke={B3} strokeWidth=".5" /><path d="M1 2l4-2 4 1-4 2z" fill={B1} /><path d="M9 6h5M5 9v6M5 12h5M10 10h5v4h-5z" stroke="#5a8298" strokeWidth="1.200" /></Glyph>
      </IconButton>
      <IconButton label="装配管理" className="mt-[10px] h-5 w-full">
        <Glyph className="h-5 w-5"><path d="M0 1h16v14H0z" fill="#e8f2f7" /><path d="M0 1h16v3H0z" fill="#2598c2" /><path d="M3 7l4-2 5 1v5l-4 3-5-2z" fill={Y2} stroke={Y3} /><path d="M3 7l5 1.500V14M8 8.500L12 6" stroke={Y3} /></Glyph>
      </IconButton>
      <IconButton label="视觉管理" className="mt-[19px] h-5 w-full">
        <Glyph className="h-5 w-5"><path d="M0 0h16v16H0z" fill="#cfe3ee" /><path d="M0 16V9c3-7 5-5 8 0 2 3 5 0 8-2v9z" fill="#217fa8" /><path d="M0 7c3-6 6-5 8 1s5 1 8-2" stroke="#fff" /><circle cx="11.500" cy="4" r="3" fill={Y2} /><path d="M0 11h5V9l4 3-4 3v-2H0z" fill="#f0742a" /></Glyph>
      </IconButton>
      <IconButton label="角色管理" className="mt-[20px] h-5 w-full">
        <Glyph className="h-5 w-5"><circle cx="11" cy="5" r="3.500" fill={Y2} /><path d="M8 13c1-4 2-5 4-5s2 3 4 5z" fill={Y2} stroke={Y3} strokeWidth=".5" /><circle cx="6" cy="5.500" r="3.500" fill={B2} /><path d="M0 14c1-3 3-3 4-5h4c1 2 3 2 4 5z" fill={B2} stroke="#0d5c82" strokeWidth=".5" /></Glyph>
      </IconButton>
    </div>
  );
}

const Chevron = () => (
  <Glyph className="h-2.5 w-2.5"><path d="M2 4l6 7 6-7" stroke="#333" strokeWidth="2.500" /></Glyph>
);

function PlaneItem({ name }) {
  return (
    <label className="flex items-center pl-[37px]">
      <span className="relative flex h-[11px] w-[11px]">
        <input type="checkbox" defaultChecked className="peer h-[11px] w-[11px] appearance-none border border-[#222] bg-white" />
        <Glyph className="pointer-events-none absolute inset-0 hidden h-[11px] w-[11px] peer-checked:block"><path d="M4 8l3 4 6-8" stroke="#1fa02c" strokeWidth="3" /></Glyph>
      </span>
      <Glyph className="mr-[3px] ml-[4px] h-3 w-3"><PlaneGlyph /></Glyph>
      {name}
    </label>
  );
}

const TREE = [
  <div className="flex items-center pl-px">
    <Chevron />
    <Glyph className="mx-0.5 h-3.5 w-3.5"><path d="M6 1h5v5H6zM1 11h5v4H1zM10 11h5v4h-5z" fill={B2} /><path d="M8 6v3M3 12V9h10v3" stroke={B3} strokeWidth="1.500" /></Glyph>
    零件008
  </div>,
  <div className="flex items-center pl-[13px]">
    <Chevron />
    <Glyph className="mx-0.5 h-3.5 w-3.5"><path d="M1 3h6l2 2h6v10H4z" fill="#e79a17" /><path d="M3 7h12v8H5z" fill="#fcc443" /></Glyph>
    历史
  </div>,
  <PlaneItem name="XY" />,
  <PlaneItem name="XZ" />,
  <PlaneItem name="YZ" />,
  <div className="flex items-center pl-[37px] text-[#ee1c24]">
    <Glyph className="mr-0.5 h-[13px] w-[13px]"><path d="M0 8l7-7v4h9v6H7v4z" fill="#e02b3c" /></Glyph>
    <span className="flex gap-1.5"><span>-----</span><span>建模停止</span><span>-----</span></span>
  </div>,
];

function Manager() {
  return (
    <aside className="flex w-[297px] shrink-0 flex-col bg-[#7c7c7c]">
      <div className="flex h-5 shrink-0 items-center pl-[3px] text-[#f0f0f0]">
        <h2 className="flex-1">管理器</h2>
        <IconButton label="浮动面板" className="mr-1"><Glyph className="h-3 w-3"><path d="M3 4h10v7H3z" stroke="#eee" strokeWidth="2" /></Glyph></IconButton>
        <IconButton label="关闭面板" className="mr-1"><Glyph className="h-3 w-3"><path d="M3 4l9 9M12 4l-9 9" stroke="#eee" strokeWidth="2.500" /></Glyph></IconButton>
      </div>
      <div className="flex min-h-0 flex-1">
        <SideTabs />
        <div className="mr-0.5 flex min-w-0 flex-1 flex-col border border-[#cdd2da] bg-[#cdd2da]">
          <div className="flex h-5 shrink-0">
            <Combo label="显示" value="显示常用" className="w-[123px]" />
            <input aria-label="搜索特征" className="ml-px min-w-0 flex-1 bg-white outline-none" />
            <IconButton label="过滤" className="ml-px w-[19px] border border-[#9fb0b8] bg-[#dfe5ea]">
              <Glyph><path d="M1 1h14L10 8v7l-4-2V8z" fill="#25a5cf" stroke="#0f7ea6" /></Glyph>
            </IconButton>
          </div>
          <div className="flex min-h-0 flex-1 flex-col border border-[#5a6068] bg-white">
            <div className="flex h-5 shrink-0 border-b border-[#5a5a5a] bg-linear-to-b from-[#f0f0f0] to-[#d4d4d4] text-[#222]">
              <div className="flex w-[151px] items-center border-r border-[#999] pl-[3px]">特征节点</div>
            </div>
            <div role="tree" className="flex min-h-0 flex-1 flex-col text-[#222]">
              {Array.from({ length: 28 }, (_, i) => (
                <div key={i} role={TREE[i] ? 'treeitem' : 'presentation'} className="flex min-h-0 flex-1 items-stretch odd:bg-white even:bg-[#f4f4f4]">
                  {TREE[i] && <div className="flex w-[151px] items-center border-r border-[#e6e6e6] whitespace-nowrap">{TREE[i]}</div>}
                </div>
              ))}
              <div className="h-2 shrink-0" />
            </div>
          </div>
          <button type="button" className="flex h-5 shrink-0 items-center gap-[5px] border-b border-[#5a6068] bg-[#9b9b9b] pt-0.5 pl-1 text-white">
            <svg viewBox="0 0 6 8" className="h-2 w-1.5"><path d="M0 0l6 4-6 4z" fill="#4d5660" /></svg>
            回放
          </button>
        </div>
      </div>
    </aside>
  );
}

function Cube({ top, left, right, line = B3 }) {
  return (
    <g stroke={line} strokeLinejoin="round">
      <path d="M1 5l7-4 7 3-6 4z" fill={top} />
      <path d="M1 5l8 3v7l-8-3z" fill={left} />
      <path d="M9 8l6-4v7l-6 4z" fill={right} />
    </g>
  );
}

const VIEW_TOOLS = [
  ['退出', 'w-[15px]', <path d="M6 2h9v12H6M1 8h9M4 5L1 8l3 3" stroke="#c2c2c2" strokeWidth="1.500" />],
  ['草图显示', 'ml-1 w-[15px]', <><circle cx="5" cy="4" r="3" fill="#dfeef3" stroke={B2} /><path d="M2 8c5 0 3 6 8 6h5v-4l-5-2-3 2" stroke="#35a045" strokeWidth="2" /><path d="M6 7l3 3" stroke={RED} /></>, true],
  ['擦除', 'ml-0.5 w-[14px]', <><path d="M5 10l8-8 2 2-7 8z" fill="#f4f0e4" stroke="#777" strokeWidth=".8" /><path d="M2 12l3-3 3 3-3 3z" fill="#d9442c" /><path d="M13 1l2 2-2 2-2-2z" fill="#c83324" /></>],
  ['着色', 'ml-[5px] w-[14px]', <><Cube top="#ffe54f" left={B2} right={B3} /><path d="M1 5l8 3 6-4v2l-6 4-8-3z" fill="#ffd42e" /><path d="M5 5l4-2 3 2-4 2z" fill="#9a9b24" /></>],
  ['显示模式', 'ml-[5px] w-[14px]', <Cube top="#7cd5f0" left={B2} right={B3} />, true],
  ['线框', 'ml-0.5 w-[15px]', <Cube top="#fff" left="#f2f5f8" right="#dce4ea" line="#8294a2" />, true],
  ['剖面', 'w-[15px]', <><path d="M1 5l7-4 7 4v7l-7 3-7-3z" fill="#ffb62a" stroke="#9a5108" /><path d="M8 1v14M1 5l7 4 7-4M2 12l6-3 6 3" stroke="#a65508" strokeWidth="1.300" /></>, true],
  ['缩放', 'ml-px w-[15px]', <><path d="M1 1h14v14H1z" stroke={B2} strokeWidth="2" /><circle cx="8" cy="7" r="4.500" fill="#ffd763" stroke="#c88610" /><circle cx="8" cy="6" r="2" fill="#e8f4f8" /><path d="M11 10l4 5" stroke="#7a4c0d" strokeWidth="2" /></>, true],
  ['窗口缩放', 'ml-0.5 w-[14px]', <><path d="M1 1h14v14H1z" stroke="#4c7489" strokeWidth="1.500" /><path d="M3 11h3v2M10 3h3v3" stroke="#d9edf5" strokeWidth="1.500" /><circle cx="10" cy="9" r="1.500" fill={B3} /></>],
  ['标注', 'ml-[6px] w-[14px]', <><path d="M3 1v12M13 1v12M3 6h10" stroke="#2c8fb0" strokeWidth="1.800" /><path d="M1 15h14" stroke={RED} strokeWidth="2" /></>, true],
  ['视图方向', 'ml-px w-[15px]', <><path d="M3 1v10M1 3h13M13 3v9" stroke="#566" /><path d="M3 8l3-3 2 2 2-2 4 4v3H3z" fill={B2} stroke={B3} /><path d="M2 14c4 2 8 2 12 0" stroke="#666" strokeWidth="1.500" /></>, true],
];

function ViewToolbar() {
  return (
    <div className="flex h-4 shrink-0 items-center">
      {VIEW_TOOLS.map(([label, cls, art, caret]) => (
        <div key={label} className="flex items-center">
          <IconButton label={label} className={cls}><Glyph>{art}</Glyph></IconButton>
          {caret && <span className="flex w-[13px] justify-center"><Caret /></span>}
        </div>
      ))}
      <button type="button" aria-label="前景色" className="ml-0.5 h-[7px] w-[13px] bg-black" />
      <button type="button" aria-label="背景色" className="ml-1.5 h-[13px] w-[14px] border border-[#47545c] bg-[#bfe4f5]" />
      <IconButton label="图层管理" className="ml-[5px] w-[14px]">
        <Glyph><path d="M0 6l9-4 7 3-7 6z" fill="#54d0bf" stroke="#1c8f95" /><path d="M0 8v2l9 4 7-6V6l-7 5z" fill="#1f93a4" /></Glyph>
      </IconButton>
      <span className="flex w-[13px] justify-center"><Caret /></span>
      <label className="flex h-4 w-[80px] items-center bg-white pl-[3px]">
        <Glyph className="h-3 w-3"><path d="M8 1c6 0 5 6 2 9H6C3 7 2 1 8 1z" fill="#fffbd0" stroke="#b49a2c" /><path d="M6 13h4" stroke="#666" strokeWidth="3" /></Glyph>
        <Glyph className="mr-1 h-3 w-3"><circle cx="8" cy="9" r="6" fill="#ffe227" stroke="#b8a31a" /></Glyph>
        <select aria-label="图层" className="min-w-0 flex-1 appearance-none bg-transparent text-black outline-none"><option>图层0000</option></select>
      </label>
      <span className="flex h-4 w-[14px] items-center justify-center bg-[#c9c9c9]"><Caret /></span>
    </div>
  );
}

function Viewport() {
  return (
    <main className="flex min-w-0 flex-1 flex-col border-l-2 border-[#565656] bg-[#7f7f7f]">
      <div className="flex h-[19px] shrink-0 items-end">
        <div className="flex h-[17px] w-[113px] items-center justify-between rounded-t-xs bg-linear-to-b from-white to-[#dde2e8] pr-[10px] pl-[24px] text-[#111]">
          <span className="whitespace-nowrap">零件008.Z3PRT</span>
          <IconButton label="关闭标签"><Glyph className="h-[10px] w-[10px]"><path d="M2 2l12 12M14 2L2 14" stroke="#8a6d2c" strokeWidth="2.500" /></Glyph></IconButton>
        </div>
        <IconButton label="新建标签" className="ml-[5px] h-[17px]"><Glyph className="h-3 w-3"><path d="M8 2v12M2 8h12" stroke="#a09898" strokeWidth="2" /></Glyph></IconButton>
      </div>
      <div className="relative flex min-h-0 flex-1 flex-col border-t border-r-2 border-b-2 border-[#b2b2b2] bg-linear-to-b from-[#a1a1a1] to-[#5f5f5f]">
        <div className="flex items-start pt-0.5 pl-[13px] text-[#0c0c0c]">
          <p className="w-[251px] shrink-0 leading-[14px] whitespace-nowrap">
            按下&lt;F2&gt;动态的观察<br />
            &lt;F8&gt;或者&lt;Shift-roll&gt; 查找下一个有效的过滤器设置.
          </p>
          <ViewToolbar />
        </div>
        <svg viewBox="-50 -50 100 100" className="absolute inset-0 m-auto h-[100px] w-[100px]" fill="none">
          <path d="M-48-48h96v96h-96zM0-48v96M-48 0h96" fill="#8c7a66" fillOpacity=".35" stroke="#936522" />
          <path d="M0 0h20" stroke="#e01010" strokeWidth="4" />
          <path d="M1 0h19" stroke="#f77" strokeWidth=".7" />
          <path d="M19-4l10 4-10 4z" fill="#e01010" />
          <path d="M0 1v20" stroke="#10b810" strokeWidth="4" />
          <path d="M0 1v20" stroke="#6f6" />
          <path d="M-4 20h8L0 29z" fill="#10c010" />
          <circle r="3.500" fill="#c9c4e0" />
        </svg>
        <div className="absolute bottom-0 left-[2px] text-[14px] leading-[14px] text-black">200 mm</div>
        <svg viewBox="0 0 60 46" className="absolute bottom-0 left-[26px] h-[46px] w-[60px]" fill="none">
          <path d="M6 6h8M6 16h8" stroke="#2020e0" strokeWidth="2" />
          <path d="M10 10h20" stroke="#e01010" strokeWidth="4" />
          <path d="M10 10h20" stroke="#f77" strokeWidth=".7" />
          <path d="M28 6l11 4-11 4z" fill="#e01010" />
          <path d="M10 12v20" stroke="#10c810" strokeWidth="4" />
          <path d="M10 12v20" stroke="#9f9" />
          <path d="M6 30h8l-4 9zM6 38l4 4 4-4M10 42v4" fill="#10e010" stroke="#10e010" strokeWidth="1.500" />
          <circle cx="10" cy="10" r="3.500" fill="#cfcbe8" />
          <text x="40" y="15" className="fill-[#ee1c1c] text-[14px]">X</text>
        </svg>
      </div>
    </main>
  );
}

function StatusBar() {
  return (
    <footer className="flex h-[25px] shrink-0 flex-col">
      <div className="h-0.5 bg-[#555]" />
      <div className="flex flex-1 items-center justify-end bg-[#393939]">
        <span className="mr-[11px] h-3 w-px bg-[#1c1c1c]" />
        <IconButton label="显示管理器" className="h-[17px] w-[17px] border border-[#e6a92a] bg-[#ffd978]">
          <Glyph><path d="M1 1h14v14H1z" fill="#eef2fa" stroke="#6f8cc4" /><path d="M1 1h14v3H1z" fill="#6f93d8" /><path d="M5 5v9" stroke="#6f8cc4" /><path d="M7 7h6M10 7v7" stroke={RED} strokeWidth="2" /></Glyph>
        </IconButton>
        <IconButton label="显示输出" className="ml-[7px] w-[14px]">
          <Glyph><path d="M1 3h14v8H1z" fill="#30bcd6" /><path d="M1 3h14v3H1z" fill="#83e2ef" /><path d="M5 13h6" stroke="#666" strokeWidth="2" /></Glyph>
        </IconButton>
        <IconButton label="显示提示" className="ml-[9px] w-[14px]">
          <Glyph><path d="M1 1h14v14H1z" fill="#e6ebf6" stroke="#6f8cc4" /><path d="M1 1h14v4H1z" fill="#5b84d4" /><path d="M4 8h8M4 11h7" stroke="#8a93a8" /></Glyph>
        </IconButton>
        <input aria-label="命令行" className="ml-2 h-[19px] w-[291px] border border-[#8c8c8c] bg-[#fafafa] outline-none" />
      </div>
      <div className="h-[3px] border-t border-[#777] bg-[#dfe3e7]" />
    </footer>
  );
}

export default function App() {
  const [tab, setTab] = useState('造型');

  return (
    <div className="relative flex h-screen flex-col overflow-hidden bg-[#5c5c5c] font-['Open_Sans','Noto_Sans_CJK_SC',sans-serif] text-[10px]">
      <Shades />
      <TitleBar />
      <TabBar active={tab} onSelect={setTab} />
      <Ribbon />
      <div className="h-1 shrink-0 bg-[#5e5e5e]" />
      <SelectBar />
      <div className="flex min-h-0 flex-1">
        <Manager />
        <Viewport />
      </div>
      <StatusBar />
      <div className="absolute top-0 left-[555px] h-1 w-[159px] rounded-b-sm border-b border-[#1b2f3d] bg-[#0c5c96]" />
      <div className="absolute top-[136px] right-px flex h-[43px] w-[7px] items-end rounded-full border-2 border-[#4c4c4c] bg-[#a6a6a6]">
        <span className="h-1.5 w-full bg-[#35c469]" />
      </div>
    </div>
  );
}
